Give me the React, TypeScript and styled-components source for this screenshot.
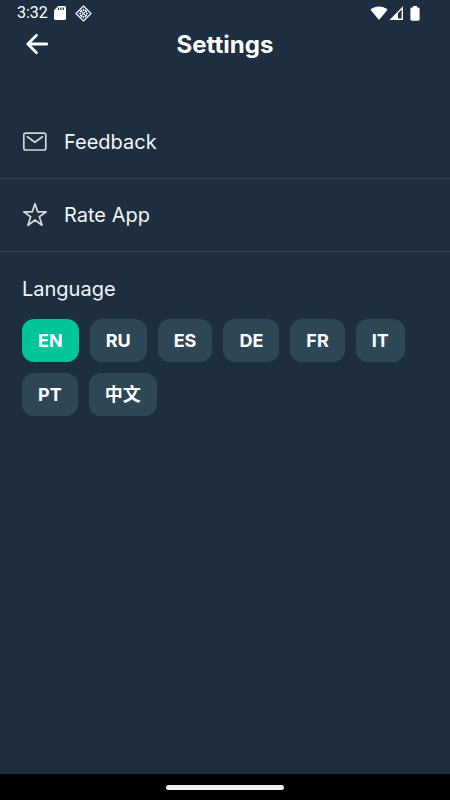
import React, { useState } from "react";
import styled, { createGlobalStyle } from "styled-components";

const GlobalStyle = createGlobalStyle`
  * { box-sizing: border-box; }
  body {
    margin: 0;
    background: #1c2e3f;
    color: #fff;
    font-family: Inter, "Noto Sans CJK SC", sans-serif;
  }
  button { font: inherit; color: inherit; border: 0; cursor: pointer; }
`;

const Screen = styled.div`
  min-height: 100vh;
  display: flex;
  flex-direction: column;
`;

const StatusBar = styled.div`
  display: flex;
  align-items: center;
  justify-content: space-between;
  height: 26px;
  padding: 0 30px 0 17px;
  font: 400 16px/26px Roboto, sans-serif;
`;

const StatusGroup = styled.div<{ $gap: number }>`
  display: flex;
  align-items: center;
  gap: ${(p) => p.$gap}px;
`;

const Header = styled.header`
  display: grid;
  grid-template-columns: 40px 1fr 40px;
  align-items: center;
  height: 38px;
  padding: 0 17px;
`;

const BackButton = styled.button`
  display: flex;
  align-items: center;
  justify-content: center;
  height: 36px;
  padding: 0;
  background: none;
`;

const Title = styled.h1`
  margin: 0;
  text-align: center;
  font-size: 24px;
  font-weight: 700;
  line-height: 36px;
`;

const Main = styled.main`
  flex: 1;
  padding-top: 42px;
`;

const MenuRow = styled.button`
  display: flex;
  align-items: center;
  gap: 16px;
  width: 100%;
  height: 73px;
  padding: 0 22px;
  background: none;
  border-bottom: 1px solid #304859;
  font-size: 20px;
  line-height: 24px;
  text-align: left;
  color: #f4f4f5;

  svg { color: #d4d5d8; }
`;

const LanguageSection = styled.section`
  padding: 25px 22px;
`;

const SectionTitle = styled.h2`
  margin: 0 0 18px;
  font-size: 20px;
  font-weight: 400;
  line-height: 24px;
  color: #f4f4f5;
`;

const ChipList = styled.div`
  display: flex;
  flex-wrap: wrap;
  gap: 11px;
`;

const Chip = styled.button<{ $active: boolean }>`
  height: 43px;
  padding: 0 16px;
  border-radius: 12px;
  background: ${(p) => (p.$active ? "#00c49a" : "#2e4756")};
  font-size: 18px;
  font-weight: 700;
  line-height: 24px;
`;

const NavBar = styled.footer`
  display: flex;
  align-items: center;
  justify-content: center;
  height: 26px;
  background: #000;
`;

const HomeHandle = styled.div`
  width: 118px;
  height: 5px;
  border-radius: 3px;
  background: #efedef;
`;

const SdCardIcon = () => (
  <svg width="12" height="14" viewBox="0 0 12 14" aria-hidden="true">
    <path d="M4.2 0H10.6Q12 0 12 1.4V12.6Q12 14 10.6 14H1.4Q0 14 0 12.6V4.2Z" fill="#fff" />
    <path d="M4.5 1.5V4M6.9 1.5V4M9.3 1.5V4" stroke="#1c2e3f" strokeWidth="1.2" />
  </svg>
);

const DiamondIcon = () => (
  <svg width="17" height="17" viewBox="0 0 17 17" fill="none" stroke="#f0f2f4" aria-hidden="true">
    <path d="M8.5 1L16 8.5 8.5 16 1 8.5Z" strokeWidth="1.3" strokeLinejoin="round" />
    <path d="M5 7.2L7.3 4.8M9.7 4.8L12 7.2M12 9.8L9.7 12.2M7.3 12.2L5 9.8" strokeWidth="1.3" />
    <path d="M6.2 6.2L10.8 10.8M10.8 6.2L6.2 10.8" strokeWidth="1.2" />
    <path d="M3.8 8.5H6M11 8.5H13.2M8.5 3.8V6M8.5 11V13.2" strokeWidth="1" />
  </svg>
);

const WifiIcon = () => (
  <svg width="18" height="14" viewBox="0 0 18 14" aria-hidden="true">
    <path d="M0.5 3.7C5.4-0.7 12.6-0.7 17.5 3.7L9 14Z" fill="#fff" />
  </svg>
);

const SignalIcon = () => (
  <svg width="14" height="14" viewBox="0 0 14 14" aria-hidden="true">
    <path
      d="M0.5 14L14 0.2V14ZM9 12.6H12.6V3.6L9 7.3Z"
      fill="#fff"
      fillRule="evenodd"
    />
    <path d="M10.2 7.8L11.2 6.8V11.6H10.2Z" fill="#1c2e3f" />
  </svg>
);

const BatteryIcon = () => (
  <svg width="10" height="15" viewBox="0 0 10 15" aria-hidden="true">
    <path d="M3 0H7V1.5H8.2Q9.6 1.5 9.6 2.9V13.3Q9.6 14.7 8.2 14.7H1.8Q0.4 14.7 0.4 13.3V2.9Q0.4 1.5 1.8 1.5H3Z" fill="#fff" />
  </svg>
);

const BackIcon = () => (
  <svg width="24" height="24" viewBox="0 0 24 24" fill="none" stroke="#fff" strokeWidth="2.8" strokeLinecap="round" strokeLinejoin="round" aria-hidden="true">
    <path d="M21.8 11H3M11.5 2.2L2.8 11 11.5 19.8" />
  </svg>
);

const MailIcon = () => (
  <svg width="26" height="26" viewBox="0 0 26 26" fill="none" stroke="currentColor" strokeWidth="1.7" strokeLinecap="round" strokeLinejoin="round" aria-hidden="true">
    <rect x="1.8" y="4.2" width="22" height="16.8" rx="2" />
    <path d="M5.4 7.7L12.9 13.3 20.4 7.7" />
  </svg>
);

const StarIcon = () => (
  <svg width="26" height="26" viewBox="0 0 26 26" fill="none" stroke="currentColor" strokeWidth="1.8" strokeLinejoin="round" aria-hidden="true">
    <path d="M13 1.8L15.7 9.8H24.2L17.4 14.7 20 23.2 13 18 6 23.2 8.6 14.7 1.8 9.8H10.3Z" />
  </svg>
);

const languages = ["EN", "RU", "ES", "DE", "FR", "IT", "PT", "中文"];

export default function App() {
  const [selected, setSelected] = useState("EN");

  return (
    <>
      <GlobalStyle />
      <Screen>
        <StatusBar>
          <StatusGroup $gap={9}>
            <StatusGroup $gap={6}>
              <span>3:32</span>
              <SdCardIcon />
            </StatusGroup>
            <DiamondIcon />
          </StatusGroup>
          <StatusGroup $gap={7}>
            <StatusGroup $gap={1}>
              <WifiIcon />
              <SignalIcon />
            </StatusGroup>
            <BatteryIcon />
          </StatusGroup>
        </StatusBar>
        <Header>
          <BackButton type="button" aria-label="Back">
            <BackIcon />
          </BackButton>
          <Title>Settings</Title>
        </Header>
        <Main>
          <MenuRow type="button">
            <MailIcon />
            Feedback
          </MenuRow>
          <MenuRow type="button">
            <StarIcon />
            Rate App
          </MenuRow>
          <LanguageSection>
            <SectionTitle>Language</SectionTitle>
            <ChipList>
              {languages.map((code) => (
                <Chip
                  key={code}
                  type="button"
                  $active={code === selected}
                  aria-pressed={code === selected}
                  onClick={() => setSelected(code)}
                >
                  {code}
                </Chip>
              ))}
            </ChipList>
          </LanguageSection>
        </Main>
        <NavBar>
          <HomeHandle />
        </NavBar>
      </Screen>
    </>
  );
}
